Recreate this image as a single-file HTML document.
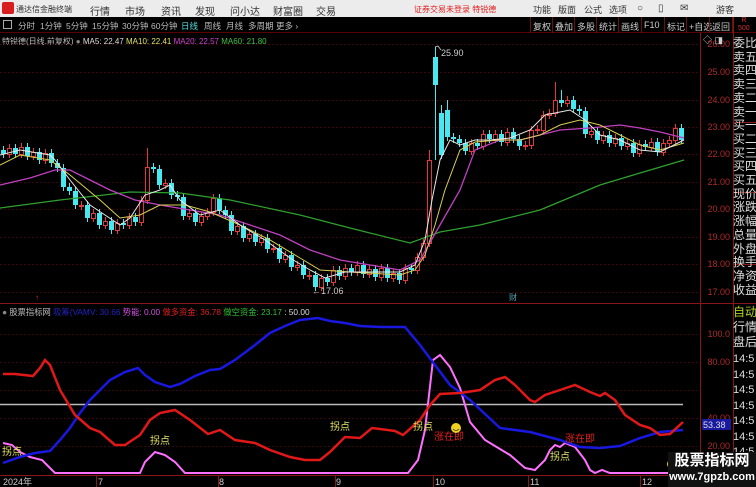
<!DOCTYPE html>
<html><head><meta charset="utf-8">
<style>
*{margin:0;padding:0;box-sizing:border-box}
body{width:756px;height:487px;overflow:hidden;background:#000;font-family:"Liberation Sans","Noto Sans CJK SC",sans-serif;position:relative}
.top{position:absolute;left:0;top:0;width:756px;height:17px;background:#ececec;font-size:10px;color:#333}
.top span{position:absolute;top:3px;white-space:nowrap}
.tb{position:absolute;left:0;top:17px;width:756px;height:16px;background:#000;border-bottom:1px solid #5a0000;font-size:8.5px;color:#bbb}
.tb span{position:absolute;top:3px;white-space:nowrap}
.btn{position:absolute;top:17px;height:16px;border-left:1px solid #6a1010;font-size:9px;color:#ccc;padding:3px 0 0 2px;white-space:nowrap}
.abs{position:absolute;white-space:nowrap}
.rp{position:absolute;left:733px;width:23px;color:#ddd;font-size:12px;line-height:13.7px;white-space:nowrap;overflow:hidden}
.ax{position:absolute;right:26px;font-size:9px;color:#b02a2a;text-align:right}
</style></head><body>
<div class="top">
<div style="position:absolute;left:2px;top:2px;width:12px;height:12px;background:#d71d1d;border-radius:2px"></div>
<span style="left:16px;font-size:8px;top:4px">通达信金融终端</span>
<span style="left:90px">行情</span><span style="left:125px">市场</span><span style="left:161px">资讯</span><span style="left:195px">发现</span><span style="left:230px">问小达</span><span style="left:273px">财富圈</span><span style="left:316px">交易</span>
<span style="left:414px;color:#e02020;font-size:8px;top:4px">证券交易未登录 特锐德</span>
<span style="left:533px;font-size:9px">功能</span><span style="left:558px;font-size:9px">版面</span><span style="left:584px;font-size:9px">公式</span><span style="left:609px;font-size:9px">选项</span>
<span style="left:637px">○</span><span style="left:658px">▯</span><span style="left:680px">✉</span>
<span style="left:716px;font-size:9px">游客</span>
</div>
<div class="tb">
<span style="left:3px;top:3px;width:9px;height:9px;border:1px solid #aaa"></span>
<span style="left:18px">分时</span><span style="left:40px">1分钟</span><span style="left:66px">5分钟</span><span style="left:92px">15分钟</span><span style="left:122px">30分钟</span><span style="left:151px">60分钟</span><span style="left:181px;color:#4ee0e0">日线</span><span style="left:204px">周线</span><span style="left:226px">月线</span><span style="left:248px">多周期</span><span style="left:276px">更多 ›</span>
</div>
<div class="btn" style="left:530px">复权</div><div class="btn" style="left:552px">叠加</div><div class="btn" style="left:574px">多股</div><div class="btn" style="left:596px">统计</div><div class="btn" style="left:618px">画线</div><div class="btn" style="left:641px">F10</div><div class="btn" style="left:664px">标记</div><div class="btn" style="left:686px">+自选</div><div class="btn" style="left:709px;width:24px;border-right:1px solid #6a1010">返回</div>
<div class="abs" style="left:738px;top:17px;font-size:7px;color:#d03030;line-height:8px;text-align:center">R<br>500</div>
<div class="abs" style="left:2px;top:36px;font-size:8px;color:#bbb">特锐德(日线,前复权) <span style="color:#888">●</span> <span style="color:#ddd">MA5: 22.47</span> <span style="color:#e0e060">MA10: 22.41</span> <span style="color:#d040d0">MA20: 22.57</span> <span style="color:#40c040">MA60: 21.80</span></div>
<svg width="756" height="487" style="position:absolute;left:0;top:0" xmlns="http://www.w3.org/2000/svg">
<g stroke="#3a0808" stroke-dasharray="2,2" stroke-width="1">
<line x1="0" y1="44.5" x2="700" y2="44.5"/><line x1="0" y1="72.5" x2="700" y2="72.5"/><line x1="0" y1="100.5" x2="700" y2="100.5"/><line x1="0" y1="127.5" x2="700" y2="127.5"/><line x1="0" y1="154.5" x2="700" y2="154.5"/><line x1="0" y1="182.5" x2="700" y2="182.5"/><line x1="0" y1="209.5" x2="700" y2="209.5"/><line x1="0" y1="237.5" x2="700" y2="237.5"/><line x1="0" y1="264.5" x2="700" y2="264.5"/><line x1="0" y1="292.5" x2="700" y2="292.5"/>
<line x1="0" y1="334.5" x2="700" y2="334.5"/><line x1="0" y1="362.5" x2="700" y2="362.5"/><line x1="0" y1="390.5" x2="700" y2="390.5"/><line x1="0" y1="418.5" x2="700" y2="418.5"/><line x1="0" y1="446.5" x2="700" y2="446.5"/>
</g>
<g stroke="#8a1515" stroke-width="1">
<line x1="0" y1="303.5" x2="733" y2="303.5"/>
<line x1="0" y1="475.5" x2="733" y2="475.5"/>
<line x1="700.5" y1="33" x2="700.5" y2="487"/>
<line x1="733.5" y1="17" x2="733.5" y2="487"/>
<line x1="733" y1="122.5" x2="756" y2="122.5"/><line x1="733" y1="192.5" x2="756" y2="192.5"/><line x1="733" y1="264.5" x2="756" y2="264.5"/><line x1="733" y1="303.5" x2="756" y2="303.5"/>
<line x1="96.5" y1="475" x2="96.5" y2="487"/><line x1="218.5" y1="475" x2="218.5" y2="487"/><line x1="335.5" y1="475" x2="335.5" y2="487"/><line x1="433.5" y1="475" x2="433.5" y2="487"/><line x1="528.5" y1="475" x2="528.5" y2="487"/><line x1="640.5" y1="475" x2="640.5" y2="487"/>
</g>
<g font-size="9" fill="#b02a2a" text-anchor="end">
<text x="730" y="47">26.00</text><text x="730" y="75">25.00</text><text x="730" y="103">24.00</text><text x="730" y="130">23.00</text><text x="730" y="157">22.00</text><text x="730" y="185">21.00</text><text x="730" y="212">20.00</text><text x="730" y="240">19.00</text><text x="730" y="267">18.00</text><text x="730" y="295">17.00</text>
<text x="730" y="337">100.0</text><text x="730" y="365">80.00</text><text x="730" y="421">40.00</text><text x="730" y="449">20.00</text>
</g>
<!-- wicks -->
<path stroke="#48e8f0" stroke-width="1" fill="none" d="M3.5,146V158M15.5,144V158M27.5,143V160M39.5,148V164M51.5,149V167M57.5,159V172M63.5,164V191M69.5,183V195M75.5,187V209M87.5,201V222M99.5,209V229M111.5,217V234M123.5,219V229M135.5,213V226M153.5,163V173M159.5,165V189M171.5,179V199M177.5,191V201M183.5,193V220M195.5,209V226M219.5,194V214M225.5,206V219M231.5,211V235M243.5,222V242M255.5,230V246M267.5,234V253M279.5,244V263M291.5,251V271M303.5,261V279M315.5,271V291M327.5,274V286M339.5,266V280M351.5,264V276M363.5,261V278M375.5,265V281M387.5,264V282M399.5,269V284M411.5,264V274M435.5,47V160M441.5,105V159M447.5,100V141M453.5,133V143M459.5,135V147M465.5,139V155M477.5,139V150M489.5,130V143M501.5,130V146M513.5,128V143M519.5,135V150M561.5,90V107M573.5,96V113M579.5,105V115M585.5,107V138M597.5,127V144M609.5,131V147M621.5,134V150M633.5,139V157M645.5,140V151M657.5,138V156M681.5,124V144"/>
<path stroke="#e03a3a" stroke-width="1" fill="none" d="M9.5,144V158M21.5,143V158M33.5,148V160M45.5,149V164M81.5,201V210M93.5,209V222M105.5,217V229M117.5,219V234M129.5,213V229M141.5,196V226M147.5,148V204M165.5,179V189M189.5,209V220M201.5,212V226M207.5,208V220M213.5,194V216M237.5,222V235M249.5,230V242M261.5,234V246M273.5,244V253M285.5,251V263M297.5,261V271M309.5,271V280M321.5,274V291M333.5,266V286M345.5,264V280M357.5,261V276M369.5,265V278M381.5,264V281M393.5,269V282M405.5,264V284M417.5,253V274M423.5,239V261M429.5,150V247M471.5,139V155M483.5,130V150M495.5,130V143M507.5,128V146M525.5,141V150M531.5,126V149M537.5,125V134M543.5,111V134M549.5,109V119M555.5,82V117M567.5,96V107M591.5,127V138M603.5,131V144M615.5,134V147M627.5,139V150M639.5,140V157M651.5,138V151M663.5,139V156M669.5,136V147M675.5,124V144"/>
<path fill="#48e8f0" d="M1,150h5v4h-5zM13,148h5v6h-5zM25,147h5v9h-5zM37,152h5v8h-5zM49,153h5v10h-5zM55,163h5v5h-5zM61,168h5v19h-5zM67,187h5v4h-5zM73,191h5v14h-5zM85,205h5v13h-5zM97,213h5v12h-5zM109,221h5v9h-5zM121,223h5v2h-5zM133,217h5v5h-5zM151,167h5v2h-5zM157,169h5v16h-5zM169,183h5v12h-5zM175,195h5v2h-5zM181,197h5v19h-5zM193,213h5v9h-5zM217,198h5v12h-5zM223,210h5v5h-5zM229,215h5v16h-5zM241,226h5v12h-5zM253,234h5v8h-5zM265,238h5v11h-5zM277,248h5v11h-5zM289,255h5v12h-5zM301,265h5v10h-5zM313,275h5v12h-5zM325,278h5v4h-5zM337,270h5v6h-5zM349,268h5v4h-5zM361,265h5v9h-5zM373,269h5v8h-5zM385,268h5v10h-5zM397,273h5v7h-5zM409,268h5v2h-5zM433,57h5v28h-5zM439,113h5v42h-5zM445,110h5v27h-5zM451,137h5v2h-5zM457,139h5v4h-5zM463,143h5v8h-5zM475,143h5v3h-5zM487,134h5v5h-5zM499,134h5v8h-5zM511,132h5v7h-5zM517,139h5v7h-5zM559,100h5v3h-5zM571,100h5v9h-5zM577,109h5v2h-5zM583,111h5v23h-5zM595,131h5v9h-5zM607,135h5v8h-5zM619,138h5v8h-5zM631,143h5v10h-5zM643,144h5v3h-5zM655,142h5v10h-5zM679,128h5v12h-5z"/>
<path fill="#000" stroke="#e03a3a" stroke-width="1" d="M7.5,148.5h4v6h-4zM19.5,147.5h4v7h-4zM31.5,152.5h4v4h-4zM43.5,153.5h4v7h-4zM79.5,205.5h4v1h-4zM91.5,213.5h4v5h-4zM103.5,221.5h4v4h-4zM115.5,223.5h4v7h-4zM127.5,217.5h4v8h-4zM139.5,200.5h4v22h-4zM145.5,167.5h4v33h-4zM163.5,183.5h4v2h-4zM187.5,213.5h4v3h-4zM199.5,216.5h4v6h-4zM205.5,212.5h4v4h-4zM211.5,198.5h4v14h-4zM235.5,226.5h4v5h-4zM247.5,234.5h4v4h-4zM259.5,238.5h4v4h-4zM271.5,248.5h4v1h-4zM283.5,255.5h4v4h-4zM295.5,265.5h4v2h-4zM307.5,275.5h4v1h-4zM319.5,278.5h4v9h-4zM331.5,270.5h4v12h-4zM343.5,268.5h4v8h-4zM355.5,265.5h4v7h-4zM367.5,269.5h4v5h-4zM379.5,268.5h4v9h-4zM391.5,273.5h4v5h-4zM403.5,268.5h4v12h-4zM415.5,257.5h4v13h-4zM421.5,243.5h4v14h-4zM427.5,160.5h4v83h-4zM469.5,143.5h4v8h-4zM481.5,134.5h4v12h-4zM493.5,134.5h4v5h-4zM505.5,132.5h4v10h-4zM523.5,145.5h4v1h-4zM529.5,130.5h4v15h-4zM535.5,129.5h4v1h-4zM541.5,115.5h4v15h-4zM547.5,113.5h4v2h-4zM553.5,100.5h4v13h-4zM565.5,100.5h4v3h-4zM589.5,131.5h4v3h-4zM601.5,135.5h4v5h-4zM613.5,138.5h4v5h-4zM625.5,143.5h4v3h-4zM637.5,144.5h4v9h-4zM649.5,142.5h4v5h-4zM661.5,143.5h4v9h-4zM667.5,140.5h4v3h-4zM673.5,128.5h4v12h-4z"/>
<polyline fill="none" stroke="#2ea02e" stroke-width="1.3" points="0,208 60,200 130,192 180,193 230,200 300,215 350,228 410,243 440,232 480,225 540,210 600,185 640,173 684,160"/>
<polyline fill="none" stroke="#c040c0" stroke-width="1.3" points="0,185 30,178 55,170 70,170 90,180 110,190 135,200 160,205 190,210 220,215 250,225 280,235 310,250 340,260 370,265 400,270 420,260 440,225 460,190 475,150 500,140 520,140 560,130 590,128 620,125 640,128 660,132 684,138"/>
<polyline fill="none" stroke="#d8d050" stroke-width="1" points="0,165 20,155 50,160 70,175 100,200 120,218 140,215 160,205 185,205 210,212 240,225 270,240 300,258 320,270 350,272 400,275 415,270 425,255 435,225 445,190 460,150 475,142 500,140 520,140 540,135 560,125 580,120 600,125 620,135 640,145 660,150 684,143"/>
<polyline fill="none" stroke="#e8e8e8" stroke-width="1" points="0,155 20,150 50,155 55,160 70,180 90,205 105,215 120,225 130,218 145,195 160,190 170,185 180,200 200,215 220,210 240,225 265,240 290,258 310,270 325,278 345,272 370,272 400,272 415,265 425,240 432,200 440,160 450,140 460,145 475,140 490,140 510,138 530,130 545,115 570,110 585,120 600,135 620,140 640,150 660,152 684,140"/>
<text x="441" y="56" fill="#ccc" font-size="9">25.90</text>
<path d="M435,47 L438,46 L441,50" fill="none" stroke="#ccc" stroke-width="0.8"/>
<text x="312" y="294" fill="#ccc" font-size="9">←17.06</text>
<text x="509" y="300" fill="#5ab" font-size="8">财</text>
<text x="35" y="300" fill="#d03030" font-size="8">↑</text>
<line x1="0" y1="404.5" x2="683" y2="404.5" stroke="#bbb" stroke-width="1.5"/>
<polyline fill="none" stroke="#ff70ff" stroke-width="2" points="3,443 12,445 20,452 30,457 42,460 50,468 55,473 140,473 145,462 155,452 165,455 175,462 185,473 408,473 418,460 425,430 433,360 440,355 450,367 460,388 470,422 485,440 510,455 525,468 535,470 545,460 550,450 555,445 560,447 565,443 575,447 585,460 590,470 595,473 602,470 610,473 683,473"/>
<polyline fill="none" stroke="#1818e0" stroke-width="2.5" points="3,463 20,457 35,453 50,451 60,440 70,428 80,413 90,400 110,380 125,372 138,368 145,375 155,382 170,387 180,384 195,376 210,370 220,369 235,360 255,345 270,333 285,326 300,320 318,318 330,321 345,323 360,326 380,327 405,327 420,345 435,365 450,385 470,400 500,428 530,432 560,440 580,447 600,448 620,446 640,438 660,432 683,430"/>
<polyline fill="none" stroke="#e01818" stroke-width="2.5" points="3,374 15,374 33,376 40,368 45,360 50,365 60,390 75,415 90,428 100,432 115,445 125,445 140,435 150,420 160,413 175,410 190,420 208,434 220,430 235,440 255,443 270,450 290,457 305,460 320,460 330,452 345,437 360,438 372,428 380,429 395,431 403,435 420,420 430,405 440,394 460,393 480,390 495,380 505,377 515,385 530,400 535,402 545,395 560,390 575,385 590,392 600,396 605,393 615,400 625,415 640,425 650,428 660,435 670,434 683,422"/>
<g font-size="10" fill="#e0e060"><text x="2" y="455">拐点</text><text x="150" y="444">拐点</text><text x="330" y="430">拐点</text><text x="413" y="430">拐点</text><text x="550" y="460">拐点</text></g>
<g font-size="10" fill="#e02020"><text x="434" y="440">涨在即</text><text x="565" y="442">涨在即</text></g>
<g><circle cx="456" cy="428" r="5" fill="#f0d020"/><circle cx="672" cy="464" r="5" fill="#f0d020"/>
<path d="M453,429 q3,3 6,0 M669,465 q3,3 6,0" stroke="#333" fill="none" stroke-width="0.8"/></g>
<rect x="702" y="419" width="29" height="11" fill="#1a1aa0"/>
<text x="703" y="428" fill="#ddd" font-size="9">53.38</text>
<g font-size="9" fill="#ccc"><text x="3" y="485">2024年</text><text x="98" y="485">7</text><text x="219" y="485">8</text><text x="336" y="485">9</text><text x="435" y="485">10</text><text x="530" y="485">11</text><text x="642" y="485">12</text></g>
</svg>
<div class="abs" style="left:2px;top:306px;font-size:8.3px;color:#bbb"><span style="color:#888">●</span> 股票指标网 <span style="color:#2222c0">吸筹(VAMV: 30.66</span> <span style="color:#d050e0">势能: 0.00</span> <span style="color:#e02020">做多资金: 36.78</span> <span style="color:#30c030">做空资金: 23.17</span> <span style="color:#ddd">: 50.00</span></div>
<div class="abs" style="left:703px;top:33px;font-size:9px;color:#ccc">◇ ◨</div>
<div class="rp" style="top:37px">委比<br>卖五<br>卖四<br>卖三<br>卖二<br>卖一<br>买一<br>买二<br>买三<br>买四<br>买五<br>现价<br>涨跌<br>涨幅<br>总量<br>外盘<br>换手<br>净资<br>收益</div>
<div class="rp" style="top:305px;line-height:15px"><span style="color:#b0d020">自动</span><br>行情<br>盘后</div>
<div class="rp" style="top:352px;line-height:15.5px;font-size:11px">14:5<br>14:5<br>14:5<br>14:5<br>14:5<br>14:5<br>14:5<br>14:5</div>
<div class="abs" style="left:668px;top:452px;width:88px;height:35px;background:#111;color:#fff;text-align:center;font-weight:bold">
<div style="font-size:15px;line-height:18px">股票指标网</div><div style="font-size:11px;line-height:14px">www.7gpzb.com</div></div>
</body></html>
